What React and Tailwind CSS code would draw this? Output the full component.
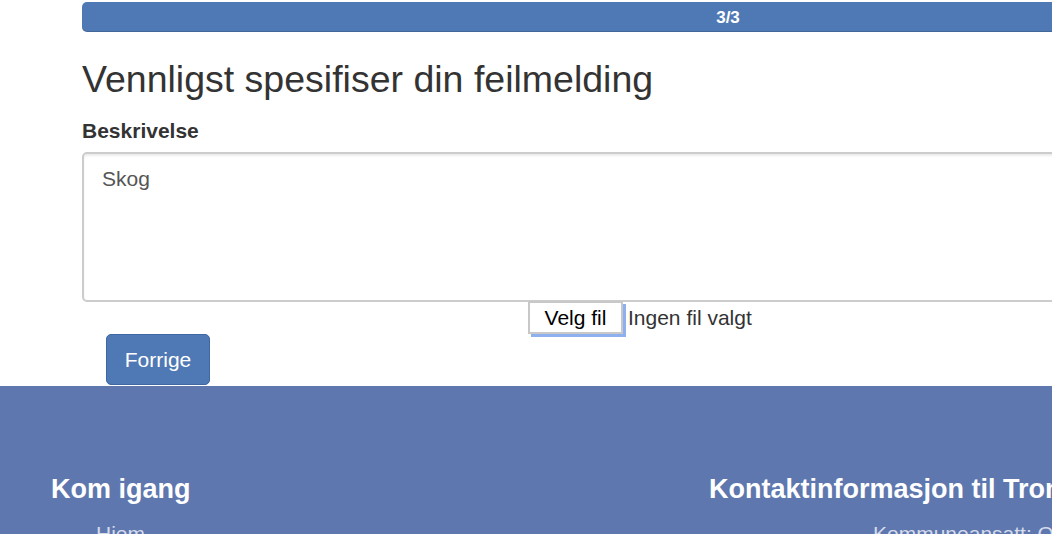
import React from 'react';

const font = { fontFamily: '"Liberation Sans", Arial, sans-serif' };

export default function App() {
  return (
    <div className="w-[1052px] h-[534px] overflow-hidden bg-white flex flex-col" style={font}>
      <div className="pl-[82px] pt-[2px] shrink-0">
        <div className="w-[1292px] h-[30px] rounded-[5px] bg-[#4f79b4] shadow-[inset_0_-1px_0_rgba(0,0,0,0.15)] flex items-center justify-center pt-[2px] text-white text-[17px] font-bold">
          3/3
        </div>

        <h2 className="mt-[27px] text-[37.5px] leading-[41px] text-[#333] whitespace-nowrap">
          Vennligst spesifiser din feilmelding
        </h2>

        <label className="block mt-[19px] text-[21px] leading-[24px] font-bold text-[#333]">Beskrivelse</label>

        <div className="mt-[9px] w-[1292px] h-[150px] border-2 border-[#cccccc] rounded-[5px] shadow-[inset_0_2px_2px_rgba(0,0,0,0.075)] px-[18px] py-[10px] text-[21px] leading-[30px] text-[#555]">
          Skog
        </div>
      </div>

      <div className="flex items-center pl-[528px] shrink-0 -mt-[1px] text-[21px] leading-[24px]">
        <div className="w-[95px] h-[33px] border-2 border-[#c8c8c8] bg-white flex items-center justify-center text-black shadow-[3px_3px_0_#8fb0ee]">
          Velg fil
        </div>
        <span className="ml-[5px] text-[#333]">Ingen fil valgt</span>
      </div>

      <div className="pl-[106px] shrink-0 pb-[1px]">
        <button className="w-[104px] h-[51px] rounded-[5px] bg-[#4f79b4] border border-[#3f67a3] text-white text-[21px]">
          Forrige
        </button>
      </div>

      <footer className="flex-1 bg-[#5e77ae] flex">
        <div className="w-[709px] shrink-0 pl-[51px] pt-[88px]">
          <h3 className="text-[27px] leading-[30px] font-bold text-white">Kom igang</h3>
          <ul className="mt-[14px] pl-[45px] text-[21px] text-[#d5dbea]">
            <li>Hjem</li>
          </ul>
        </div>
        <div className="shrink-0 pt-[88px] whitespace-nowrap">
          <h3 className="text-[27px] leading-[30px] font-bold text-white">Kontaktinformasjon til Tromsø kommune</h3>
          <ul className="mt-[14px] pl-[164px] text-[21px] text-[#d5dbea]">
            <li>Kommuneansatt: Ola Nordmann</li>
          </ul>
        </div>
      </footer>
    </div>
  );
}
